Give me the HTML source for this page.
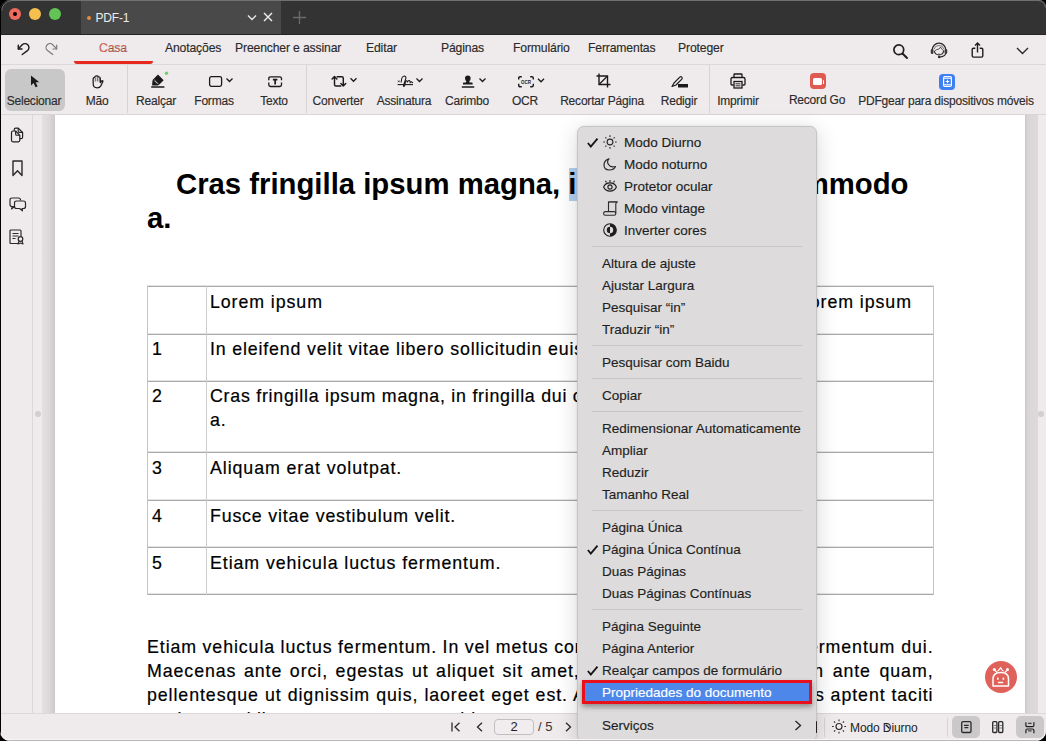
<!DOCTYPE html>
<html><head><meta charset="utf-8">
<style>
*{box-sizing:border-box;margin:0;padding:0}
html,body{width:1046px;height:741px;overflow:hidden;background:#000;font-family:"Liberation Sans",sans-serif}
.a{position:absolute;white-space:nowrap}
#win{position:absolute;left:0;top:0;width:1046px;height:741px;background:#efeaeb;border-radius:11px 7px 10px 10px;overflow:hidden}
#title{left:0;top:0;width:1046px;height:35px;background:#333;border-bottom:1px solid #242424}
#tab{left:81px;top:1px;width:200px;height:33px;background:#494949}
.tl{width:12px;height:12px;border-radius:50%}
.mt{font-size:12.2px;letter-spacing:-0.15px;color:#2a2a2a;top:41px;-webkit-text-stroke:0.15px #2a2a2a}
.tt{font-size:12px;letter-spacing:-0.2px;color:#2c2c2c;top:94px;-webkit-text-stroke:0.15px #2c2c2c;text-align:center;width:120px;margin-left:-60px}
.sep{width:1px;background:#d8d3d4}
svg{position:absolute;overflow:visible}
.h1{font-size:29.3px;font-weight:700;line-height:34px;color:#000}
.tl1{background:#b0b0b0}
.bt{font-size:17.8px;line-height:24px;letter-spacing:0.92px;color:#000;-webkit-text-stroke:0.2px #000}
.mi{font-size:13.5px;line-height:22px;color:#1f1f1f;margin-top:1px;-webkit-text-stroke:0.15px currentColor}
.pr{right:112.5px;text-align:right}
.pj{width:785px;text-align:justify;text-align-last:justify;white-space:normal}
</style></head><body>
<div id="win">
  <div id="title" class="a"></div>
  <div id="tab" class="a"></div>
  <div class="a tl" style="left:9px;top:8px;background:#ee6a5f"></div>
  <div class="a" style="left:12.8px;top:11.8px;width:4.4px;height:4.4px;border-radius:50%;background:#000"></div>
  <div class="a tl" style="left:29px;top:8px;background:#f4bf4f"></div>
  <div class="a tl" style="left:49px;top:8px;background:#61c454"></div>
  <!-- title bar -->
  <div class="a" style="left:0;top:0;width:1046px;height:1px;background:#707070"></div>
  <div class="a" style="left:86.5px;top:15.5px;width:4px;height:4px;border-radius:50%;background:#e98a3a"></div>
  <div class="a" style="left:95.5px;top:11px;font-size:12px;letter-spacing:-0.2px;color:#ececec">PDF-1</div>
  <svg style="left:247px;top:14px" width="10" height="7"><path d="M1 1.5 L5 5.5 L9 1.5" stroke="#e6e6e6" stroke-width="1.4" fill="none"/></svg>
  <svg style="left:263px;top:12px" width="10" height="10"><path d="M1 1 L9 9 M9 1 L1 9" stroke="#f0f0f0" stroke-width="1.4" fill="none"/></svg>
  <svg style="left:293px;top:11px" width="13" height="13"><path d="M6.5 0 V13 M0 6.5 H13" stroke="#6a6a6a" stroke-width="1.3" fill="none"/></svg>
  <!-- menu bar -->
  <div class="a" style="left:0;top:64px;width:1046px;height:1px;background:#dcd7d8"></div>
  <svg style="left:12px;top:38px" width="50" height="22"><path d="M6.4 10.8 L10.2 6.8 A3.9 3.9 0 0 1 15.8 12.3 L10.2 16.5" stroke="#1e1e1e" stroke-width="1.45" fill="none" stroke-linecap="round" stroke-linejoin="round"/><path d="M6.3 7.2 V11 H10" stroke="#1e1e1e" stroke-width="1.45" fill="none" stroke-linecap="round" stroke-linejoin="round"/><path d="M44.6 10.8 L40.8 6.8 A3.9 3.9 0 0 0 35.2 12.3 L40.8 16.5" stroke="#7a7a7a" stroke-width="1.2" fill="none" stroke-linecap="round" stroke-linejoin="round"/><path d="M44.7 7.2 V11 H41" stroke="#7a7a7a" stroke-width="1.2" fill="none" stroke-linecap="round" stroke-linejoin="round"/></svg>
  <div class="a mt" style="left:99px;color:#e46a5e">Casa</div>
  <div class="a" style="left:74px;top:60.5px;width:79px;height:3px;border-radius:0 0 3px 3px;background:#e8281f"></div>
  <div class="a mt" style="left:165px">Anotações</div>
  <div class="a mt" style="left:235px">Preencher e assinar</div>
  <div class="a mt" style="left:366px">Editar</div>
  <div class="a mt" style="left:441px">Páginas</div>
  <div class="a mt" style="left:513px">Formulário</div>
  <div class="a mt" style="left:588px">Ferramentas</div>
  <div class="a mt" style="left:678px">Proteger</div>
  <svg style="left:893px;top:44px" width="16" height="15"><circle cx="5.8" cy="5.8" r="4.9" stroke="#1e1e1e" stroke-width="1.7" fill="none"/><path d="M9.5 9.5 L14 14" stroke="#1e1e1e" stroke-width="2" stroke-linecap="round"/></svg>
  <svg style="left:929.5px;top:41px" width="18" height="17"><path d="M2.2 9 A6.8 6.8 0 0 1 15.8 9" stroke="#2a2a2a" stroke-width="1.3" fill="none"/><path d="M4 8.2 A5.2 5.2 0 0 1 14 8.2" stroke="#6a6a6a" stroke-width="0.9" fill="none"/><path d="M4.3 10 A4.8 4.8 0 0 0 13.7 10" stroke="#2a2a2a" stroke-width="1.2" fill="none"/><path d="M4.3 10.2 Q6 8.5 9 8 L10.5 6 L11.8 8.2 Q13 8.8 13.7 10" stroke="#444" stroke-width="0.9" fill="none"/><rect x="0.8" y="8" width="2.6" height="5" rx="1.2" fill="#3a3a3a"/><rect x="14.6" y="8" width="2.6" height="5" rx="1.2" fill="#3a3a3a"/><path d="M15.6 12.8 Q14.5 15.8 10 16" stroke="#2a2a2a" stroke-width="1.1" fill="none"/><circle cx="9.2" cy="16" r="1.3" fill="#2a2a2a"/><path d="M8 13 H10" stroke="#666" stroke-width="0.8"/></svg>
  <svg style="left:970.5px;top:42px" width="14" height="16"><path d="M4.3 6.2 H2.5 Q1.2 6.2 1.2 7.5 V13.8 Q1.2 15.1 2.5 15.1 H10.5 Q11.8 15.1 11.8 13.8 V7.5 Q11.8 6.2 10.5 6.2 H8.7" stroke="#1e1e1e" stroke-width="1.4" fill="none"/><path d="M6.5 10.5 V1.2 M4 3.6 L6.5 1.1 L9 3.6" stroke="#1e1e1e" stroke-width="1.4" fill="none"/></svg>
  <svg style="left:1016px;top:47px" width="13" height="8"><path d="M1 1 L6.5 6.5 L12 1" stroke="#2a2a2a" stroke-width="1.4" fill="none"/></svg>
  <!-- toolbar -->
  <div class="a" style="left:0;top:114px;width:1046px;height:1px;background:#d9d4d5"></div>
  <div class="a" style="left:5px;top:69px;width:60px;height:41.7px;border-radius:6px;background:#c9c8c8"></div>
  <div class="a sep" style="left:127px;top:65px;height:48px"></div>
  <div class="a sep" style="left:306px;top:65px;height:48px"></div>
  <div class="a sep" style="left:709px;top:65px;height:48px"></div>
  <div class="a tt" style="left:34px">Selecionar</div>
  <div class="a tt" style="left:97px">Mão</div>
  <div class="a tt" style="left:156px">Realçar</div>
  <div class="a tt" style="left:214px">Formas</div>
  <div class="a tt" style="left:274px">Texto</div>
  <div class="a tt" style="left:338px">Converter</div>
  <div class="a tt" style="left:404px">Assinatura</div>
  <div class="a tt" style="left:467px">Carimbo</div>
  <div class="a tt" style="left:525px">OCR</div>
  <div class="a tt" style="left:602px">Recortar Página</div>
  <div class="a tt" style="left:679px">Redigir</div>
  <div class="a tt" style="left:738px">Imprimir</div>
  <div class="a tt" style="left:817px;top:92.5px">Record Go</div>
  <div class="a tt" style="left:946px;width:200px;margin-left:-100px">PDFgear para dispositivos móveis</div>
  <!-- icons -->
  <svg style="left:30px;top:75px" width="11" height="13"><path d="M1 0.5 L1 10.5 L3.6 8 L5.6 12.3 L7.6 11.4 L5.7 7.2 L9.3 7.2 Z" fill="#1a1a1a"/></svg>
  <svg style="left:92px;top:75px" width="12" height="14"><path d="M1.2 3.8 Q1.2 2.3 2.6 2.3 Q3 0.8 4.6 0.8 Q6 0.8 6.4 1.8 Q8.3 1.8 8.3 3.5 V7.6 L9.6 6 Q10.5 5.1 11 6.2 L9 10.6 Q7.7 12.9 5.2 12.9 Q1.2 12.9 1.2 9 Z" stroke="#1a1a1a" stroke-width="1.25" fill="none" stroke-linejoin="round"/><path d="M1.2 3.8 V6.8 M3.3 2.5 V6.5 M5.3 1.5 V6.5 M7.2 2.5 V6.5" stroke="#555" stroke-width="0.9"/></svg>
  <svg style="left:149px;top:72px" width="20" height="17"><path d="M9 2.6 L14.6 8.2 L10.4 12.4 L4.8 6.8 Z" fill="#1a1a1a"/><path d="M4.8 6.8 L10.4 12.4 L8.6 13.6 H3.2 V11.8 L3.6 8 Z" fill="#1a1a1a"/><path d="M5.4 8.6 L8.6 11.8" stroke="#efeaeb" stroke-width="0.9"/><path d="M2.2 15 H15.4" stroke="#1a1a1a" stroke-width="1.5"/><circle cx="17.5" cy="1.3" r="1.7" fill="#6cd36a"/></svg>
  <svg style="left:208px;top:75px" width="26" height="12"><rect x="1.6" y="1.7" width="12" height="9.6" rx="1.8" stroke="#1a1a1a" stroke-width="1.3" fill="none"/><path d="M18.5 3.5 L21.5 6.5 L24.5 3.5" stroke="#1a1a1a" stroke-width="1.3" fill="none"/></svg>
  <svg style="left:267.5px;top:75.5px" width="15" height="12"><path d="M0.8 4.2 V2.5 Q0.8 0.8 2.5 0.8 H11.8 Q13.5 0.8 13.5 2.5 V4.2 M0.8 6.6 V8.8 Q0.8 10.5 2.5 10.5 H11.8 Q13.5 10.5 13.5 8.8 V6.6" stroke="#1a1a1a" stroke-width="1.3" fill="none"/><path d="M4.9 3.6 H9.4 M7.15 3.6 V8.4" stroke="#1a1a1a" stroke-width="1.7"/></svg>
  <svg style="left:331px;top:75px" width="28" height="13"><path d="M9.8 10.9 H5 Q3.5 10.9 3.5 9.4 V1.6 M1.1 4 L3.5 1.6 L5.9 4" stroke="#1a1a1a" stroke-width="1.45" fill="none" stroke-linejoin="round" stroke-linecap="round"/><path d="M6.2 1.7 H10.8 Q12.3 1.7 12.3 3.2 V10.9 M9.9 8.5 L12.3 10.9 L14.7 8.5" stroke="#1a1a1a" stroke-width="1.45" fill="none" stroke-linejoin="round" stroke-linecap="round"/><path d="M19.5 3.3 L22.5 6.3 L25.5 3.3" stroke="#1a1a1a" stroke-width="1.3" fill="none"/></svg>
  <svg style="left:397px;top:75px" width="28" height="13"><path d="M1 5.6 L2.6 7.2 M2.6 5.6 L1 7.2" stroke="#1a1a1a" stroke-width="0.9"/><path d="M4.2 7 Q4.6 1 7.4 1 Q9.6 1.2 8.6 4.2 Q7.6 7.2 6.6 10.2 Q6.2 11.8 7.2 11.4 Q8.2 10.8 8.3 7.5 Q8.6 5.6 9.6 5.8 Q10.4 6 10.4 7.4 Q11 5.2 12.2 5.6 Q13 6 13.2 7.4 Q14 6.4 15.6 7.6" stroke="#1a1a1a" stroke-width="1.1" fill="none" stroke-linecap="round"/><path d="M0.6 9.6 H16" stroke="#1a1a1a" stroke-width="1.1"/><path d="M19.5 3.5 L22.5 6.5 L25.5 3.5" stroke="#1a1a1a" stroke-width="1.3" fill="none"/></svg>
  <svg style="left:461px;top:75px" width="28" height="14"><path d="M6.8 0.4 Q9.6 0.4 9.6 3.2 Q9.6 5 8.3 6.2 L8.6 7.6 H11 Q11.6 7.6 11.6 8.2 V9.6 H2 V8.2 Q2 7.6 2.6 7.6 H5 L5.3 6.2 Q4 5 4 3.2 Q4 0.4 6.8 0.4 Z" fill="#1a1a1a"/><path d="M0.8 12 H13.2" stroke="#1a1a1a" stroke-width="1.5"/><path d="M18.5 3.5 L21.5 6.5 L24.5 3.5" stroke="#1a1a1a" stroke-width="1.3" fill="none"/></svg>
  <svg style="left:517.5px;top:75.5px" width="30" height="12"><path d="M0.7 3.6 V2.2 Q0.7 0.7 2.2 0.7 H3.8 M12.2 0.7 H13.8 Q15.3 0.7 15.3 2.2 V3.6 M15.3 7.8 V9.3 Q15.3 10.8 13.8 10.8 H12.2 M3.8 10.8 H2.2 Q0.7 10.8 0.7 9.3 V7.8" stroke="#1a1a1a" stroke-width="1.4" fill="none"/><text x="8" y="7.9" font-size="5.6" font-weight="700" text-anchor="middle" font-family="Liberation Sans" fill="#1a1a1a" textLength="10" lengthAdjust="spacingAndGlyphs">OCR</text><path d="M20 2.8 L23 5.8 L26 2.8" stroke="#1a1a1a" stroke-width="1.3" fill="none"/></svg>
  <svg style="left:596px;top:73px" width="15" height="15"><path d="M3 0.5 V11.5 H14.5 M0.5 3 H11.5 V14.5" stroke="#1a1a1a" stroke-width="1.4" fill="none"/><path d="M3.5 11 L11 3.5" stroke="#1a1a1a" stroke-width="1.2"/></svg>
  <svg style="left:671px;top:76px" width="18" height="12"><path d="M1 10.5 L3 7 L8.8 1.2 Q9.8 0.2 10.8 1.2 Q11.8 2.2 10.8 3.2 L5 9 Z" stroke="#1a1a1a" stroke-width="1.2" fill="none" stroke-linejoin="round"/><rect x="7" y="8" width="10" height="3.5" fill="#1a1a1a"/></svg>
  <svg style="left:730px;top:73px" width="16" height="16"><path d="M4 4.5 V1.5 Q4 1 4.5 1 H11.5 Q12 1 12 1.5 V4.5" stroke="#1a1a1a" stroke-width="1.3" fill="none"/><path d="M3.5 12 H2 Q1 12 1 11 V6 Q1 4.5 2.5 4.5 H13.5 Q15 4.5 15 6 V11 Q15 12 14 12 H12.5" stroke="#1a1a1a" stroke-width="1.3" fill="none"/><rect x="4" y="8.5" width="8" height="6.5" stroke="#1a1a1a" stroke-width="1.3" fill="none"/><path d="M5.5 10.8 H10.5 M5.5 12.8 H10.5" stroke="#1a1a1a" stroke-width="0.9"/></svg>
  <div class="a" style="left:810px;top:73px;width:16px;height:16px;border-radius:4px;background:#df5a50"></div>
  <div class="a" style="left:813px;top:78px;width:8.5px;height:7px;border-radius:1.5px;background:#fff"></div>
  <div class="a" style="left:822.5px;top:79.5px;width:1.8px;height:4px;border-radius:0.8px;background:#fff"></div>
  <div class="a" style="left:939px;top:73.5px;width:16px;height:16px;border-radius:4px;background:#3e7ff1"></div>
  <svg style="left:943px;top:76px" width="9" height="11"><rect x="0.6" y="0.6" width="7.8" height="9.8" rx="1.2" stroke="#fff" stroke-width="1.2" fill="none"/><path d="M1 2.3 H8 M1 8.7 H8" stroke="#fff" stroke-width="0.9"/><path d="M4.5 3.8 V7.2 M2.8 5.5 H6.2" stroke="#fff" stroke-width="1.1"/></svg>
  <!-- left sidebar & page area -->
  <div class="a" style="left:32px;top:115px;width:1px;height:598px;background:#dcd7d8"></div>
  <div class="a" style="left:42px;top:115px;width:13px;height:598px;background:linear-gradient(to right,#e4e0e1,#dbd7d8 60%,#cdc9ca)"></div>
  <div class="a" style="left:34.5px;top:411px;width:6px;height:6px;border-radius:50%;background:#d2cfd0"></div>
  <div class="a" style="left:1025px;top:115px;width:13px;height:598px;background:linear-gradient(to right,#cbc8c9,#dad6d7 25%,#dedadb)"></div>
  <div class="a" style="left:1038px;top:411px;width:6px;height:6px;border-radius:50%;background:#d2cfd0"></div>
  <div id="page" class="a" style="left:55px;top:115px;width:970px;height:598px;background:#fff"></div>
  <svg style="left:10px;top:127px" width="14" height="16"><path d="M4.2 3.8 V2.7 Q4.2 1.2 5.7 1.2 H8.2 L12.6 5.4 V10.2 Q12.6 11.7 11.1 11.7 H9.8" stroke="#222" stroke-width="1.2" fill="none" stroke-linejoin="round"/><path d="M8.2 1.2 V4 Q8.2 5.4 9.6 5.4 H12.6" stroke="#222" stroke-width="1.1" fill="none"/><path d="M1.5 5.5 Q1.5 4 3 4 H5.6 L9.8 8.3 V13.3 Q9.8 14.8 8.3 14.8 H3 Q1.5 14.8 1.5 13.3 Z" stroke="#222" stroke-width="1.2" fill="none" stroke-linejoin="round"/><path d="M5.6 4 V7 Q5.6 8.3 6.9 8.3 H9.8" stroke="#222" stroke-width="1.1" fill="none"/></svg>
  <svg style="left:12px;top:160px" width="11" height="17"><path d="M1 1 H10 V15.5 L5.5 10.8 L1 15.5 Z" stroke="#2a2a2a" stroke-width="1.4" fill="none" stroke-linejoin="round"/></svg>
  <svg style="left:8.5px;top:197px" width="18" height="15"><path d="M3 1 H9.5 Q11.5 1 11.5 3 V3.5 M5 9.5 H3 Q1 9.5 1 7.5 V3 Q1 1 3 1" stroke="#2a2a2a" stroke-width="1.2" fill="none"/><path d="M3.5 9.5 L2.5 12 L5.5 9.5" stroke="#2a2a2a" stroke-width="1.1" fill="none" stroke-linejoin="round"/><path d="M7.5 4 H14.5 Q16.5 4 16.5 6 V9.5 Q16.5 11.5 14.5 11.5 H13 L13.5 13.8 L10.5 11.5 H7.5 Q5.5 11.5 5.5 9.5 V6 Q5.5 4 7.5 4 Z" stroke="#2a2a2a" stroke-width="1.2" fill="none" stroke-linejoin="round"/></svg>
  <svg style="left:9px;top:229px" width="16" height="16"><path d="M9 14.5 H2 Q1 14.5 1 13.5 V2 Q1 1 2 1 H11 Q12 1 12 2 V7" stroke="#2a2a2a" stroke-width="1.2" fill="none"/><path d="M3.5 4.5 H9.5 M3.5 7 H9.5 M3.5 9.5 H6.5" stroke="#2a2a2a" stroke-width="1.1"/><circle cx="11.5" cy="10" r="2.3" stroke="#2a2a2a" stroke-width="1.2" fill="none"/><path d="M10 12 L9 15 L11.5 14 L14 15 L13 12" stroke="#2a2a2a" stroke-width="1.1" fill="none" stroke-linejoin="round"/></svg>
  <!-- document -->
  <div class="a" style="left:569px;top:168px;width:12px;height:33px;background:#b3cff0"></div>
  <div class="a h1" style="left:176px;top:167.4px">Cras fringilla ipsum magna, in fringilla dui commodo</div>
  <div class="a h1" style="left:147px;top:201.4px">a.</div>
  <!-- table lines -->
  <div class="a" style="left:147px;top:285px;width:787px;height:1px;background:#e4e4e4"></div><div class="a" style="left:147px;top:286px;width:787px;height:1px;background:#a9a9a9"></div>
  <div class="a" style="left:147px;top:333px;width:787px;height:1px;background:#e4e4e4"></div><div class="a" style="left:147px;top:334px;width:787px;height:1px;background:#a9a9a9"></div>
  <div class="a" style="left:147px;top:380px;width:787px;height:1px;background:#e4e4e4"></div><div class="a" style="left:147px;top:381px;width:787px;height:1px;background:#a9a9a9"></div>
  <div class="a" style="left:147px;top:451px;width:787px;height:1px;background:#e4e4e4"></div><div class="a" style="left:147px;top:452px;width:787px;height:1px;background:#a9a9a9"></div>
  <div class="a" style="left:147px;top:499px;width:787px;height:1px;background:#e4e4e4"></div><div class="a" style="left:147px;top:500px;width:787px;height:1px;background:#a9a9a9"></div>
  <div class="a" style="left:147px;top:546px;width:787px;height:1px;background:#e4e4e4"></div><div class="a" style="left:147px;top:547px;width:787px;height:1px;background:#a9a9a9"></div>
  <div class="a" style="left:147px;top:593px;width:787px;height:1px;background:#e4e4e4"></div><div class="a" style="left:147px;top:594px;width:787px;height:1px;background:#a9a9a9"></div>
  <div class="a" style="left:147px;top:286px;width:1px;height:309px;background:#c4c4c4"></div>
  <div class="a" style="left:206px;top:286px;width:1px;height:309px;background:#cdcdcd"></div>
  <div class="a" style="left:795px;top:286px;width:1px;height:309px;background:#cdcdcd"></div>
  <div class="a" style="left:933px;top:286px;width:1px;height:309px;background:#c4c4c4"></div>
  <div class="a bt" style="left:210px;top:289.5px">Lorem ipsum</div>
  <div class="a bt" style="left:799px;top:289.5px">Lorem ipsum</div>
  <div class="a bt" style="left:152px;top:337px">1</div>
  <div class="a bt" style="left:210px;top:337px;letter-spacing:0.83px">In eleifend velit vitae libero sollicitudin euismod.</div>
  <div class="a bt" style="left:152px;top:384px">2</div>
  <div class="a bt" style="left:210px;top:384px;letter-spacing:0.75px">Cras fringilla ipsum magna, in fringilla dui commodo<br>a.</div>
  <div class="a bt" style="left:152px;top:456px">3</div>
  <div class="a bt" style="left:210px;top:456px">Aliquam erat volutpat.</div>
  <div class="a bt" style="left:152px;top:503.5px">4</div>
  <div class="a bt" style="left:210px;top:503.5px;letter-spacing:0.82px">Fusce vitae vestibulum velit.</div>
  <div class="a bt" style="left:152px;top:550.5px">5</div>
  <div class="a bt" style="left:210px;top:550.5px">Etiam vehicula luctus fermentum.</div>
  <!-- paragraph -->
  <div class="a bt" style="left:147px;top:635px;word-spacing:-0.4px">Etiam vehicula luctus fermentum. In vel metus congue, pulvinar</div>
  <div class="a bt" style="left:147px;top:659px;word-spacing:1.71px">Maecenas ante orci, egestas ut aliquet sit amet, sagittis a magna.</div>
  <div class="a bt" style="left:147px;top:683px;word-spacing:0.21px">pellentesque ut dignissim quis, laoreet eget est. Aliquam erat</div>
  <div class="a bt" style="left:147px;top:707px;word-spacing:-0.5px">sociosqu ad litora torquent per conubia nostra, per inceptos himenaeos.</div>
  <div class="a bt pr" style="top:635px;word-spacing:0px">lacus vel, fermentum dui.</div>
  <div class="a bt pr" style="top:659px;word-spacing:2.7px">magna. Aliquam ante quam,</div>
  <div class="a bt pr" style="top:683px;word-spacing:0px">volutpat. Class aptent taciti</div>
  <!-- robot -->
  <div class="a" style="left:985px;top:661px;width:32px;height:32px;border-radius:50%;background:#e0615a"></div>
  <svg style="left:985px;top:661px" width="32" height="32"><path d="M8 25 V18 Q8 11.6 15.8 11.6 Q23.5 11.6 23.5 18 V25 Z" stroke="#fff" stroke-width="1.5" fill="none" stroke-linejoin="round"/><circle cx="9.3" cy="8.5" r="1.5" fill="#fff"/><circle cx="22.5" cy="8.5" r="1.5" fill="#fff"/><path d="M10 9.5 L12 11.5 M21.8 9.5 L19.8 11.5" stroke="#fff" stroke-width="1.2"/><path d="M12.5 10.3 L14 8.8 L15.5 6.8 L17 8.8 L18.5 10.3" stroke="#fff" stroke-width="1.2" fill="none"/><rect x="12" y="16.5" width="1.6" height="2.2" rx="0.5" fill="#fff"/><rect x="17.6" y="16.5" width="1.6" height="2.2" rx="0.5" fill="#fff"/><path d="M13.5 21.5 H17.7" stroke="#fff" stroke-width="1.3" stroke-linecap="round"/></svg>
  <!-- bottom bar -->
  <div class="a" style="left:0;top:713px;width:1046px;height:28px;background:#efeaeb"></div>
  <div class="a" style="left:0;top:713px;width:1046px;height:1px;background:#dcd7d8"></div>
  <svg style="left:451px;top:722px" width="10" height="10"><path d="M1 0.5 V9.5" stroke="#2a2a2a" stroke-width="1.3"/><path d="M8.5 0.8 L4 5 L8.5 9.2" stroke="#2a2a2a" stroke-width="1.3" fill="none"/></svg>
  <svg style="left:476px;top:722px" width="8" height="10"><path d="M6 0.8 L1.5 5 L6 9.2" stroke="#2a2a2a" stroke-width="1.3" fill="none"/></svg>
  <div class="a" style="left:494px;top:719px;width:40px;height:16px;border:1px solid #c2bdbe;border-radius:4px;background:#f1eced"></div>
  <div class="a" style="left:494px;top:719px;width:40px;text-align:center;font-size:13px;line-height:16px;color:#222">2</div>
  <div class="a" style="left:538px;top:719px;font-size:13px;line-height:16px;color:#333">/ 5</div>
  <svg style="left:564px;top:722px" width="8" height="10"><path d="M2 0.8 L6.5 5 L2 9.2" stroke="#2a2a2a" stroke-width="1.3" fill="none"/></svg>
  <div class="a sep" style="left:824px;top:718px;height:19px"></div>
  <div class="a sep" style="left:947px;top:718px;height:19px"></div>
  <svg style="left:832px;top:719px" width="14" height="15"><circle cx="7" cy="7.5" r="3" stroke="#2a2a2a" stroke-width="1.1" fill="none"/><path d="M7 0.5 V2.2 M7 12.8 V14.5 M0 7.5 H1.7 M12.3 7.5 H14 M2 2.5 L3.2 3.7 M10.8 11.3 L12 12.5 M2 12.5 L3.2 11.3 M10.8 3.7 L12 2.5" stroke="#2a2a2a" stroke-width="1.1"/></svg>
  <div class="a" style="left:850px;top:720.5px;font-size:12px;line-height:14px;color:#222;letter-spacing:-0.1px">Modo Diurno</div>
  <svg style="left:885px;top:724px" width="6" height="6"><path d="M0.8 0.8 L4.5 4.5" stroke="#1a1a1a" stroke-width="1.3"/></svg>
  <div class="a" style="left:952px;top:716px;width:27.5px;height:21.5px;border-radius:5px;background:#cbc8c9"></div>
  <div class="a" style="left:1016px;top:716px;width:28px;height:21.5px;border-radius:5px;background:#cbc8c9"></div>
  <svg style="left:960.5px;top:721px" width="11" height="12"><rect x="0.7" y="0.7" width="9.3" height="10.8" rx="1.3" stroke="#2a2a2a" stroke-width="1.3" fill="none"/><path d="M3 4.4 H7.7 M3.4 6.6 H7.3" stroke="#2a2a2a" stroke-width="1.1"/></svg>
  <svg style="left:992px;top:721px" width="12" height="12"><rect x="0.7" y="0.7" width="4.2" height="10.8" rx="1" stroke="#2a2a2a" stroke-width="1.3" fill="none"/><rect x="6.6" y="0.7" width="4.2" height="10.8" rx="1" stroke="#2a2a2a" stroke-width="1.3" fill="none"/><path d="M1.5 4.5 H4 M1.5 7 H4 M7.4 4.5 H10 M7.4 7 H10" stroke="#666" stroke-width="0.8"/></svg>
  <svg style="left:1024.5px;top:721.5px" width="10" height="12"><path d="M0.9 0.3 V3.2 Q0.9 4.7 2.4 4.7 H7.4 Q8.9 4.7 8.9 3.2 V0.3 M0.9 11.3 V8.5 Q0.9 7 2.4 7 H7.4 Q8.9 7 8.9 8.5 V11.3" stroke="#1e1e1e" stroke-width="1.2" fill="none"/><path d="M3.1 1.3 H6.6 M3.1 8.9 H6.6" stroke="#1e1e1e" stroke-width="1"/></svg>
  <!-- context menu -->
  <div class="a" style="left:577px;top:125.5px;width:239.5px;height:616px;border-radius:7px;background:#dddbdb;border:1px solid #c6c4c4;box-shadow:0 4px 22px rgba(0,0,0,0.16),0 0 3px rgba(0,0,0,0.08)"></div>
  <div class="a" style="left:592px;top:246.0px;width:210px;height:1px;background:#c7c5c5"></div>
  <div class="a" style="left:592px;top:345.0px;width:210px;height:1px;background:#c7c5c5"></div>
  <div class="a" style="left:592px;top:378.0px;width:210px;height:1px;background:#c7c5c5"></div>
  <div class="a" style="left:592px;top:411.0px;width:210px;height:1px;background:#c7c5c5"></div>
  <div class="a" style="left:592px;top:510.0px;width:210px;height:1px;background:#c7c5c5"></div>
  <div class="a" style="left:592px;top:609.0px;width:210px;height:1px;background:#c7c5c5"></div>
  <div class="a" style="left:592px;top:708.0px;width:210px;height:1px;background:#d3d1d1"></div>
  <div class="a mi" style="left:624px;top:131.32px">Modo Diurno</div>
  <svg style="left:587.3px;top:137.7px" width="12" height="10"><path d="M0.9 5 L3.8 8.5 L10.5 0.7" stroke="#151515" stroke-width="1.85" fill="none"/></svg>
  <div class="a mi" style="left:624px;top:153.32px">Modo noturno</div>
  <div class="a mi" style="left:624px;top:175.32px">Protetor ocular</div>
  <div class="a mi" style="left:624px;top:197.32px">Modo vintage</div>
  <div class="a mi" style="left:624px;top:219.32px">Inverter cores</div>
  <div class="a mi" style="left:602px;top:252.32px">Altura de ajuste</div>
  <div class="a mi" style="left:602px;top:274.32px">Ajustar Largura</div>
  <div class="a mi" style="left:602px;top:296.32px">Pesquisar “in”</div>
  <div class="a mi" style="left:602px;top:318.32px">Traduzir “in”</div>
  <div class="a mi" style="left:602px;top:351.32px">Pesquisar com Baidu</div>
  <div class="a mi" style="left:602px;top:384.32px">Copiar</div>
  <div class="a mi" style="left:602px;top:417.32px">Redimensionar Automaticamente</div>
  <div class="a mi" style="left:602px;top:439.32px">Ampliar</div>
  <div class="a mi" style="left:602px;top:461.32px">Reduzir</div>
  <div class="a mi" style="left:602px;top:483.32px">Tamanho Real</div>
  <div class="a mi" style="left:602px;top:516.32px">Página Única</div>
  <div class="a mi" style="left:602px;top:538.32px">Página Única Contínua</div>
  <svg style="left:587.3px;top:544.7px" width="12" height="10"><path d="M0.9 5 L3.8 8.5 L10.5 0.7" stroke="#151515" stroke-width="1.85" fill="none"/></svg>
  <div class="a mi" style="left:602px;top:560.32px">Duas Páginas</div>
  <div class="a mi" style="left:602px;top:582.32px">Duas Páginas Contínuas</div>
  <div class="a mi" style="left:602px;top:615.32px">Página Seguinte</div>
  <div class="a mi" style="left:602px;top:637.32px">Página Anterior</div>
  <div class="a mi" style="left:602px;top:659.32px">Realçar campos de formulário</div>
  <svg style="left:587.3px;top:665.7px" width="12" height="10"><path d="M0.9 5 L3.8 8.5 L10.5 0.7" stroke="#151515" stroke-width="1.85" fill="none"/></svg>
  <div class="a mi" style="left:602px;top:714.32px">Serviços</div>
  <!-- menu icons: text shifted for icon rows -->
  <svg style="left:603px;top:135px" width="14" height="14"><circle cx="7" cy="7" r="2.9" stroke="#2a2a2a" stroke-width="1.1" fill="none"/><path d="M7 0.3 V2 M7 12 V13.7 M0.3 7 H2 M12 7 H13.7 M2.3 2.3 L3.4 3.4 M10.6 10.6 L11.7 11.7 M2.3 11.7 L3.4 10.6 M10.6 3.4 L11.7 2.3" stroke="#2a2a2a" stroke-width="1.1"/></svg>
  <svg style="left:603px;top:158px" width="14" height="13"><path d="M6 0.8 Q1 2.2 1 7 Q1 12 6.5 12 Q10.8 12 12.5 8.5 Q7.5 10 5.3 6.3 Q3.6 3.3 6 0.8 Z" stroke="#2a2a2a" stroke-width="1.2" fill="none" stroke-linejoin="round"/></svg>
  <svg style="left:603px;top:179px" width="14" height="14"><path d="M0.6 8 C3 2.5 11 2.5 13.4 8 C11 13.5 3 13.5 0.6 8 Z" stroke="#1e1e1e" stroke-width="1.15" fill="none"/><circle cx="7" cy="8" r="2.1" stroke="#1e1e1e" stroke-width="1.1" fill="none"/><path d="M2.5 1.8 L3.4 3.6 M7 1 V3 M11.5 1.8 L10.6 3.6" stroke="#1e1e1e" stroke-width="1.1"/></svg>
  <svg style="left:603px;top:201px" width="16" height="15"><path d="M5.5 10.5 V1 H14.5 Q13 1 12.8 3 V12.5" stroke="#2a2a2a" stroke-width="1.1" fill="none"/><path d="M5.5 1 Q5.2 0.8 14.5 0.8" stroke="#2a2a2a" stroke-width="0.9" fill="none"/><rect x="0.6" y="10.6" width="12.2" height="3.6" rx="1.8" stroke="#2a2a2a" stroke-width="1.1" fill="none"/></svg>
  <svg style="left:603px;top:223px" width="14" height="14"><circle cx="7" cy="7" r="6.3" stroke="#1e1e1e" stroke-width="1.1" fill="none"/><path d="M7 0.7 A6.3 6.3 0 0 1 7 13.3 Z" fill="#1e1e1e"/><path d="M7 3.8 A3.2 3.2 0 0 0 7 10.2 Z" fill="#1e1e1e"/><path d="M7 3.8 A3.2 3.2 0 0 1 7 10.2 Z" fill="#dddbdb"/></svg>
  <!-- highlight -->
  <div class="a" style="left:582px;top:680px;width:230px;height:24px;border:3px solid #e8101a;background:#4d87ea;box-shadow:0 3px 5px rgba(0,0,0,0.35)"></div>
  <div class="a mi" style="left:602px;top:681.3px;color:#fff">Propriedades do documento</div>
  <svg style="left:794px;top:720px" width="8" height="11"><path d="M1.5 1 L6.5 5.5 L1.5 10" stroke="#2a2a2a" stroke-width="1.4" fill="none"/></svg>
  <div class="a" style="left:816px;top:721px;width:1.4px;height:11.5px;background:#222;border-radius:0.7px"></div>
  <div class="a" style="left:0;top:739px;width:1046px;height:1px;background:#f8f4f5"></div>
  <div class="a" style="left:0;top:740px;width:1046px;height:1px;background:#bab6b7"></div>
  <div class="a" style="left:0;top:0;width:1px;height:741px;background:#000"></div>
  <svg style="left:0;top:0" width="14" height="14"><path d="M0 0 H11.5 A10.5 10.5 0 0 0 1 10.5 V14 H0 Z" fill="#000"/><path d="M11.5 0.6 A10.9 10.9 0 0 0 1.6 10.5" stroke="#707070" stroke-width="0.9" fill="none"/></svg>
  <svg style="left:1032px;top:0" width="14" height="14"><path d="M14 0 H6.5 A7.5 7.5 0 0 1 14 7.5 Z" fill="#000"/><path d="M6.5 0.6 A6.9 6.9 0 0 1 13.4 7.5" stroke="#7a7a7a" stroke-width="0.9" fill="none"/></svg>
</div>
</body></html>
